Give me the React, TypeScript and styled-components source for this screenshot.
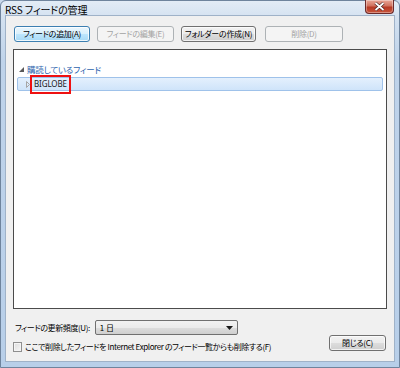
import React from "react";
import styled, { createGlobalStyle, css } from "styled-components";

const Global = createGlobalStyle`
  html, body { margin: 0; padding: 0; background: #c9d9ec; }
  body { width: 400px; height: 368px; overflow: hidden; }
  * { box-sizing: border-box; }
`;

const FONT = `"Noto Sans CJK JP", "Noto Sans", sans-serif`;

const Window = styled.div`
  width: 400px;
  height: 368px;
  display: flex;
  flex-direction: column;
  border: 1px solid #6f849d;
  border-radius: 6px 6px 0 0;
  background: linear-gradient(to bottom, #e3ecf6 0px, #d3e1f0 18px, #bfd3ea 60px, #b8cfe9 100%);
  font-family: ${FONT};
  font-feature-settings: "palt";
  color: #000;
`;

const TitleBar = styled.div`
  height: 18px;
  display: flex;
  align-items: flex-start;
  justify-content: space-between;
  padding-left: 4px;
  padding-right: 5px;
`;

const Title = styled.div`
  font-size: 10px;
  line-height: 10px;
  margin-top: 4px;
  letter-spacing: -0.1px;
`;

const CloseBox = styled.div`
  width: 29px;
  height: 14px;
  margin-top: -1px;
  border: 1px solid #6b2a2a;
  border-top: none;
  border-radius: 0 0 4px 4px;
  background: linear-gradient(to bottom, #e9a797 0%, #d0725f 45%, #b73a25 55%, #c8553c 100%);
  display: flex;
  align-items: center;
  justify-content: center;
  box-shadow: inset 0 0 0 1px rgba(255, 255, 255, 0.35);
`;

const Client = styled.div`
  flex: 1;
  margin: 0 4px 5px 4px;
  background: #f0f0f0;
  border: 1px solid #9fb2c8;
  display: flex;
  flex-direction: column;
  padding: 10px 7px 9px 7px;
`;

const Toolbar = styled.div`
  display: flex;
  gap: 7px;
  padding-left: 1px;
`;

const Button = styled.div<{ $w: number; $default?: boolean; $disabled?: boolean }>`
  width: ${(p) => p.$w}px;
  height: 16px;
  border: 1px solid #707070;
  border-radius: 3px;
  background: linear-gradient(to bottom, #f2f2f2 0%, #ebebeb 50%, #dddddd 51%, #cfcfcf 100%);
  box-shadow: inset 0 0 0 1px rgba(255, 255, 255, 0.7);
  display: flex;
  align-items: center;
  justify-content: center;
  font-size: 8px;
  line-height: 10px;
  letter-spacing: -0.3px;
  white-space: nowrap;
  color: #000;
  ${(p) =>
    p.$default &&
    css`
      border-color: #3c7fb1;
      background: linear-gradient(to bottom, #eaf6fd 0%, #d9f0fc 50%, #bee6fd 51%, #a7d9f5 100%);
      box-shadow: inset 0 0 0 1px rgba(255, 255, 255, 0.8);
    `}
  ${(p) =>
    p.$disabled &&
    css`
      border-color: #adb2b5;
      background: #f4f4f4;
      box-shadow: none;
      color: #a3a3a3;
    `}
`;

const Tree = styled.div`
  margin-top: 7px;
  width: 374px;
  height: 260px;
  background: #fff;
  border: 1px solid #4b4b4b;
  padding: 12px 3px 0 3px;
  display: flex;
  flex-direction: column;
`;

const GroupRow = styled.div`
  height: 14px;
  display: flex;
  align-items: center;
  padding-left: 2px;
  font-size: 8.5px;
  color: #2d64ad;
  letter-spacing: -0.2px;
`;

const Arrow = styled.svg`
  flex: none;
  margin-right: 3px;
`;

const ItemRow = styled.div`
  margin-top: 1px;
  height: 14px;
  display: flex;
  align-items: center;
  padding-left: 8px;
  border: 1px solid #9fc2ea;
  border-radius: 2px;
  background: linear-gradient(to bottom, #e4f0fd 0%, #cfe4fa 100%);
`;

const ItemLabel = styled.div`
  position: relative;
  font-size: 8px;
  line-height: 10px;
  font-family: "Noto Sans", ${FONT};
  letter-spacing: -0.1px;
  color: #1a1a1a;
  padding: 0 2px 0 1px;
`;

const RedMark = styled.div`
  position: absolute;
  left: -3px;
  top: -4px;
  right: -2px;
  bottom: -5px;
  border: 2px solid #ee1111;
`;

const SettingRow = styled.div`
  margin-top: 11px;
  display: flex;
  align-items: center;
  padding-left: 2px;
  gap: 5px;
`;

const Label = styled.div`
  font-size: 8px;
  letter-spacing: -0.4px;
  white-space: nowrap;
`;

const Select = styled.div`
  width: 143px;
  height: 15px;
  border: 1px solid #707070;
  border-radius: 2px;
  background: linear-gradient(to bottom, #f2f2f2 0%, #ebebeb 50%, #dddddd 51%, #cfcfcf 100%);
  display: flex;
  align-items: center;
  justify-content: space-between;
  padding: 0 4px 0 4px;
  font-size: 8px;
`;

const BottomRow = styled.div`
  display: flex;
  align-items: flex-end;
  justify-content: space-between;
  margin-top: 0px;
`;

const CheckWrap = styled.div`
  display: flex;
  align-items: center;
  gap: 3px;
`;

const CheckBox = styled.div`
  width: 9px;
  height: 10px;
  border: 1px solid #8f8f8f;
  background: linear-gradient(135deg, #dcdcdc 0%, #f6f6f6 100%);
  box-shadow: inset 0 0 0 1px #f4f4f4;
`;

const CheckText = styled.div`
  font-size: 8px;
  letter-spacing: -0.4px;
  white-space: nowrap;
`;

const CloseButton = styled(Button)`
  margin-right: 1px;
  margin-bottom: 1px;
`;

export default function App() {
  return (
    <>
      <Global />
      <Window>
        <TitleBar>
          <Title>RSS フィードの管理</Title>
          <CloseBox>
            <svg width="11" height="9" viewBox="0 0 11 9">
              <path d="M1.5 1 L9.5 8 M9.5 1 L1.5 8" stroke="#3d1a1a" strokeWidth="3" />
              <path d="M1.5 1 L9.5 8 M9.5 1 L1.5 8" stroke="#ffffff" strokeWidth="1.8" />
            </svg>
          </CloseBox>
        </TitleBar>
        <Client>
          <Toolbar>
            <Button $w={76} $default>
              フィードの追加(A)
            </Button>
            <Button $w={77} $disabled>
              フィードの編集(E)
            </Button>
            <Button $w={75}>フォルダーの作成(N)</Button>
            <Button $w={78} $disabled style={{ marginLeft: 2 }}>
              削除(D)
            </Button>
          </Toolbar>
          <Tree>
            <GroupRow>
              <Arrow width="5" height="5" viewBox="0 0 5 5">
                <path d="M5 0 L5 5 L0 5 Z" fill="#595959" />
              </Arrow>
              購読しているフィード
            </GroupRow>
            <ItemRow>
              <Arrow width="4" height="7" viewBox="0 0 4 7">
                <path d="M0.5 0.5 L3.5 3.5 L0.5 6.5 Z" fill="none" stroke="#a6a6a6" strokeWidth="1" />
              </Arrow>
              <ItemLabel>
                BIGLOBE
                <RedMark />
              </ItemLabel>
            </ItemRow>
          </Tree>
          <SettingRow>
            <Label>フィードの更新頻度(U):</Label>
            <Select>
              <span>1 日</span>
              <svg width="7" height="4" viewBox="0 0 7 4">
                <path d="M0 0 L7 0 L3.5 4 Z" fill="#1a1a1a" />
              </svg>
            </Select>
          </SettingRow>
          <BottomRow>
            <CheckWrap>
              <CheckBox />
              <CheckText>ここで削除したフィードを Internet Explorer のフィード一覧からも削除する(F)</CheckText>
            </CheckWrap>
            <CloseButton $w={57}>閉じる(C)</CloseButton>
          </BottomRow>
        </Client>
      </Window>
    </>
  );
}
